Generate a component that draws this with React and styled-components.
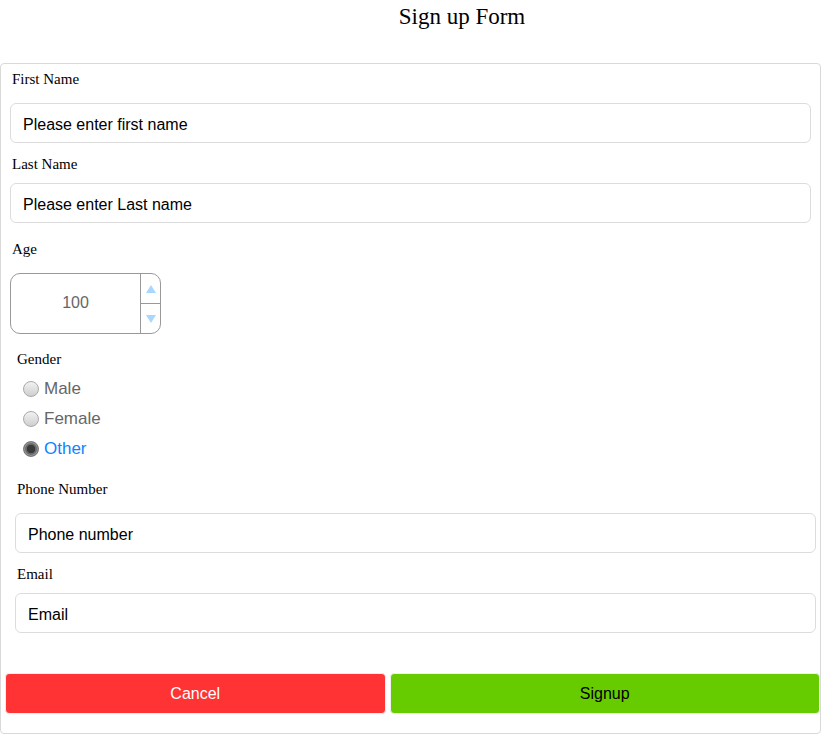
import React from 'react';
import styled, { createGlobalStyle } from 'styled-components';

const GlobalStyle = createGlobalStyle`
  body {
    margin: 0;
    background: #fff;
    font-family: "Liberation Serif", "Times New Roman", serif;
  }
`;

export default function App() {
  return (
    <>
      <GlobalStyle />
      <Page>
        <Title>Sign up Form</Title>
        <FormBox>
          <Label $left={11} $top={6}>First Name</Label>
          <TextInput $left={10} $top={15} placeholder="Please enter first name" />
          <Label $left={11} $top={12}>Last Name</Label>
          <TextInput $left={10} $top={10} placeholder="Please enter Last name" />

          <Label $left={11} $top={17}>Age</Label>
          <NumberBox>
            <NumberValue>100</NumberValue>
            <Spinner>
              <SpinButton>
                <Arrow $up />
              </SpinButton>
              <SpinButton>
                <Arrow />
              </SpinButton>
            </Spinner>
          </NumberBox>

          <Label $left={16} $top={16}>Gender</Label>
          <RadioGroup>
            <RadioRow>
              <Radio type="radio" name="gender" value="male" />
              <RadioText>Male</RadioText>
            </RadioRow>
            <RadioRow>
              <Radio type="radio" name="gender" value="female" />
              <RadioText>Female</RadioText>
            </RadioRow>
            <RadioRow>
              <Radio type="radio" name="gender" value="other" defaultChecked />
              <RadioText $active>Other</RadioText>
            </RadioRow>
          </RadioGroup>

          <Label $left={16} $top={16}>Phone Number</Label>
          <TextInput $left={15} $top={15} placeholder="Phone number" />
          <Label $left={16} $top={12}>Email</Label>
          <TextInput $left={15} $top={10} placeholder="Email" />

          <ButtonRow>
            <Button $color="#ff3333" $text="#fff" $width={381}>Cancel</Button>
            <Button $color="#66cc00" $text="#000" $width={431}>Signup</Button>
          </ButtonRow>
        </FormBox>
      </Page>
    </>
  );
}

const Page = styled.div`
  width: 821px;
`;

const Title = styled.h1`
  margin: 0;
  padding: 3px 0 0 103px;
  height: 63px;
  box-sizing: border-box;
  text-align: center;
  font-size: 23px;
  font-weight: normal;
  line-height: 28px;
  color: #000;
`;

const FormBox = styled.div`
  width: 821px;
  height: 671px;
  box-sizing: border-box;
  border: 1px solid #d9d9d9;
  border-radius: 4px;
  display: flex;
  flex-direction: column;
`;

const Label = styled.label`
  display: block;
  margin: ${({ $top }) => $top}px 0 0 ${({ $left }) => $left}px;
  font-size: 15px;
  line-height: 18px;
  color: #000;
`;

const TextInput = styled.input`
  box-sizing: border-box;
  width: 801px;
  height: 40px;
  margin: ${({ $top }) => $top}px 0 0 ${({ $left }) => $left - 1}px;
  padding: 3px 12px 0;
  border: 1px solid #dcdcdc;
  border-radius: 6px;
  font-family: "Liberation Sans", Arial, sans-serif;
  font-size: 16px;
  color: #000;
  outline: none;

  &::placeholder {
    color: #000;
  }
`;

const NumberBox = styled.div`
  box-sizing: border-box;
  width: 151px;
  height: 61px;
  margin: 15px 0 0 9px;
  border: 1px solid #999;
  border-radius: 10px;
  display: flex;
  overflow: hidden;
`;

const NumberValue = styled.div`
  flex: 1;
  display: flex;
  align-items: center;
  justify-content: center;
  padding-bottom: 2px;
  font-family: "Liberation Sans", Arial, sans-serif;
  font-size: 16px;
  color: #666;
`;

const Spinner = styled.div`
  width: 19px;
  border-left: 1px solid #999;
  display: flex;
  flex-direction: column;
`;

const SpinButton = styled.div`
  flex: 1;
  display: flex;
  align-items: center;
  justify-content: center;

  & + & {
    border-top: 1px solid #999;
  }
`;

const Arrow = styled.span`
  width: 0;
  height: 0;
  border-left: 5px solid transparent;
  border-right: 5px solid transparent;
  ${({ $up }) =>
    $up ? 'border-bottom: 8px solid #a8d8ff;' : 'border-top: 8px solid #a8d8ff;'}
`;

const RadioGroup = styled.div`
  display: flex;
  flex-direction: column;
  margin: 6px 0 0 22px;
`;

const RadioRow = styled.label`
  display: flex;
  align-items: center;
  height: 30px;
  gap: 5px;
`;

const Radio = styled.input`
  appearance: none;
  margin: 0;
  width: 16px;
  height: 16px;
  border-radius: 50%;
  border: 1px solid #aaa;
  background: linear-gradient(#f2f2f2, #cfcfcf);
  box-sizing: border-box;

  &:checked {
    border: 1px solid #777;
    background: radial-gradient(circle, #3a3a3a 0 4px, #6a6a6a 4.5px);
    box-shadow: inset 0 0 0 1px #999;
  }
`;

const RadioText = styled.span`
  font-family: "Liberation Sans", Arial, sans-serif;
  font-size: 17px;
  color: ${({ $active }) => ($active ? '#0a84ff' : '#666')};
`;

const ButtonRow = styled.div`
  display: flex;
  gap: 4px;
  margin: 40px 0 0 4px;
`;

const Button = styled.button`
  box-sizing: border-box;
  width: ${({ $width }) => $width}px;
  height: 41px;
  border: 1px solid #f0f0f0;
  border-radius: 4px;
  background: ${({ $color }) => $color};
  color: ${({ $text }) => $text};
  font-family: "Liberation Sans", Arial, sans-serif;
  font-size: 16px;
`;
